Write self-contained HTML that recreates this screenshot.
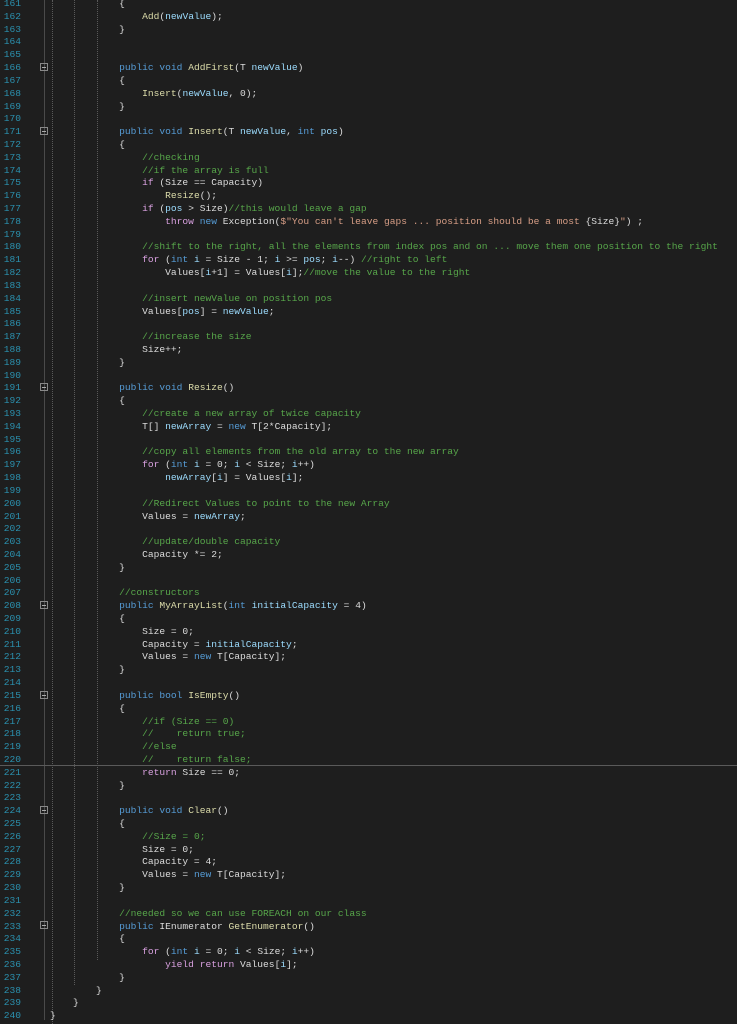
<!DOCTYPE html><html><head><meta charset="utf-8"><style>
body{margin:0;width:737px;height:1024px;background:#1e1e1e;overflow:hidden;position:relative;font-family:"Liberation Mono",monospace;font-size:9.6px}
pre{margin:0;font:inherit;line-height:12.81px;position:absolute;top:-2px;color:#dcdcdc;white-space:pre}
#ln{left:0;width:21px;text-align:right;color:#2b91af}
#code{left:50px}
.k{color:#569cd6}.c{color:#d8a0df}.m{color:#dcdcaa}.v{color:#9cdcfe}.g{color:#57a64a}.s{color:#d69d85}
.gd{position:absolute;top:0;height:1024px;border-left:1px dotted #5a5a5a}
.bx{position:absolute;left:40px;width:6px;height:6px;border:1px solid #888;}
.bx:after{content:"";position:absolute;left:1px;top:3px;width:4px;height:1px;background:#aaa}
</style></head><body>
<div style="position:absolute;left:44px;top:0;height:1020px;border-left:1px solid #4a4a4a"></div>
<div class="gd" style="left:52px"></div><div class="gd" style="left:74px;height:985px"></div><div class="gd" style="left:97px;height:960px"></div>
<div style="position:absolute;left:0;top:765px;width:737px;height:1px;background:#5a5a5a"></div>
<div class="bx" style="top:63px"></div><div class="bx" style="top:127px"></div><div class="bx" style="top:383px"></div><div class="bx" style="top:601px"></div><div class="bx" style="top:691px"></div><div class="bx" style="top:806px"></div><div class="bx" style="top:921px"></div>
<pre id="ln">161
162
163
164
165
166
167
168
169
170
171
172
173
174
175
176
177
178
179
180
181
182
183
184
185
186
187
188
189
190
191
192
193
194
195
196
197
198
199
200
201
202
203
204
205
206
207
208
209
210
211
212
213
214
215
216
217
218
219
220
221
222
223
224
225
226
227
228
229
230
231
232
233
234
235
236
237
238
239
240</pre>
<pre id="code">            {
                <span class="m">Add</span>(<span class="v">newValue</span>);
            }


            <span class="k">public</span> <span class="k">void</span> <span class="m">AddFirst</span>(T <span class="v">newValue</span>)
            {
                <span class="m">Insert</span>(<span class="v">newValue</span>, 0);
            }

            <span class="k">public</span> <span class="k">void</span> <span class="m">Insert</span>(T <span class="v">newValue</span>, <span class="k">int</span> <span class="v">pos</span>)
            {
                <span class="g">//checking</span>
                <span class="g">//if the array is full</span>
                <span class="c">if</span> (Size == Capacity)
                    <span class="m">Resize</span>();
                <span class="c">if</span> (<span class="v">pos</span> &gt; Size)<span class="g">//this would leave a gap</span>
                    <span class="c">throw</span> <span class="k">new</span> Exception(<span class="s">$"You can't leave gaps ... position should be a most </span>{Size}<span class="s">"</span>) ;

                <span class="g">//shift to the right, all the elements from index pos and on ... move them one position to the right</span>
                <span class="c">for</span> (<span class="k">int</span> <span class="v">i</span> = Size - 1; <span class="v">i</span> &gt;= <span class="v">pos</span>; <span class="v">i</span>--) <span class="g">//right to left</span>
                    Values[<span class="v">i</span>+1] = Values[<span class="v">i</span>];<span class="g">//move the value to the right</span>

                <span class="g">//insert newValue on position pos</span>
                Values[<span class="v">pos</span>] = <span class="v">newValue</span>;

                <span class="g">//increase the size</span>
                Size++;
            }

            <span class="k">public</span> <span class="k">void</span> <span class="m">Resize</span>()
            {
                <span class="g">//create a new array of twice capacity</span>
                T[] <span class="v">newArray</span> = <span class="k">new</span> T[2*Capacity];

                <span class="g">//copy all elements from the old array to the new array</span>
                <span class="c">for</span> (<span class="k">int</span> <span class="v">i</span> = 0; <span class="v">i</span> &lt; Size; <span class="v">i</span>++)
                    <span class="v">newArray</span>[<span class="v">i</span>] = Values[<span class="v">i</span>];

                <span class="g">//Redirect Values to point to the new Array</span>
                Values = <span class="v">newArray</span>;

                <span class="g">//update/double capacity</span>
                Capacity *= 2;
            }

            <span class="g">//constructors</span>
            <span class="k">public</span> <span class="m">MyArrayList</span>(<span class="k">int</span> <span class="v">initialCapacity</span> = 4)
            {
                Size = 0;
                Capacity = <span class="v">initialCapacity</span>;
                Values = <span class="k">new</span> T[Capacity];
            }

            <span class="k">public</span> <span class="k">bool</span> <span class="m">IsEmpty</span>()
            {
                <span class="g">//if (Size == 0)</span>
                <span class="g">//    return true;</span>
                <span class="g">//else</span>
                <span class="g">//    return false;</span>
                <span class="c">return</span> Size == 0;
            }

            <span class="k">public</span> <span class="k">void</span> <span class="m">Clear</span>()
            {
                <span class="g">//Size = 0;</span>
                Size = 0;
                Capacity = 4;
                Values = <span class="k">new</span> T[Capacity];
            }

            <span class="g">//needed so we can use FOREACH on our class</span>
            <span class="k">public</span> IEnumerator <span class="m">GetEnumerator</span>()
            {
                <span class="c">for</span> (<span class="k">int</span> <span class="v">i</span> = 0; <span class="v">i</span> &lt; Size; <span class="v">i</span>++)
                    <span class="c">yield</span> <span class="c">return</span> Values[<span class="v">i</span>];
            }
        }
    }
}</pre>
</body></html>
